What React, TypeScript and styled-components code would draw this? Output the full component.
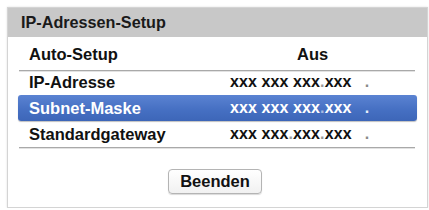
import React from "react";
import styled, { createGlobalStyle } from "styled-components";

const Global = createGlobalStyle`
  html, body { margin: 0; padding: 0; background: #ffffff; }
  body { font-family: "Liberation Sans", Arial, Helvetica, sans-serif; }
`;

const Panel = styled.div`
  box-sizing: border-box;
  margin: 7px 0 0 7px;
  width: 421px;
  height: 201px;
  border: 1px solid #d4d4d4;
  box-shadow: 0 0 2px rgba(0, 0, 0, 0.12);
  background: #ffffff;
  display: flex;
  flex-direction: column;
`;

const Header = styled.div`
  height: 29px;
  background: #c8c8c8;
  display: flex;
  align-items: center;
  padding-left: 13px;
  font-size: 16.2px;
  font-weight: bold;
  color: #1a1a1a;
`;

const List = styled.div`
  margin: 1px 10px 0 10px;
  display: flex;
  flex-direction: column;
`;

const Row = styled.div<{ $h: number; $selected?: boolean; $mt?: number }>`
  box-sizing: border-box;
  height: ${(p) => p.$h}px;
  margin-top: ${(p) => p.$mt ?? 0}px;
  display: grid;
  grid-template-columns: 201px 1fr;
  align-items: center;
  padding-left: 11px;
  border-radius: 3px;
  color: ${(p) => (p.$selected ? "#ffffff" : "#111111")};
  background: ${(p) =>
    p.$selected ? "linear-gradient(#5b83d2, #4670c3 55%, #3d66b8)" : "transparent"};
  box-shadow: ${(p) => (p.$selected ? "0 1px 1px rgba(0,0,0,0.25)" : "none")};
`;

const Divider = styled.div`
  height: 1px;
  margin: 0 2px 0 1px;
  background: #a9a9a9;
  box-shadow: 0 1px 0 #e2e2e2;
`;

const Label = styled.span`
  font-size: 16.5px;
  font-weight: bold;
  white-space: nowrap;
`;

const Value = styled.span`
  font-size: 16px;
  font-weight: bold;
  letter-spacing: 0.1px;
  white-space: nowrap;
`;

const AutoValue = styled.span`
  font-size: 16.5px;
  font-weight: bold;
  padding-left: 67px;
`;

const Faint = styled.span<{ $selected?: boolean }>`
  color: ${(p) => (p.$selected ? "rgba(255,255,255,0.55)" : "#9a9a9a")};
`;

const Tail = styled.span<{ $selected?: boolean }>`
  margin-left: 13px;
  color: ${(p) => (p.$selected ? "#e8eefa" : "#8a8a8a")};
`;

const Footer = styled.div`
  display: flex;
  justify-content: center;
  padding-top: 21px;
  padding-right: 5px;
`;

const Button = styled.button`
  box-sizing: border-box;
  width: 94px;
  height: 25px;
  border: 1px solid #b4b4b4;
  border-radius: 4px;
  background: linear-gradient(#ffffff, #f1f1f1);
  box-shadow: 0 1px 1px rgba(0, 0, 0, 0.15);
  font-family: "Liberation Sans", Arial, sans-serif;
  font-size: 16.5px;
  font-weight: bold;
  color: #111111;
  padding: 0;
`;

type Addr = { label: string; parts: string[]; selected?: boolean; h: number; mt?: number };

const rows: Addr[] = [
  { label: "IP-Adresse", parts: ["xxx xxx xxx", "xxx"], h: 22 },
  { label: "Subnet-Maske", parts: ["xxx xxx xxx", "xxx"], selected: true, h: 26, mt: 2 },
  { label: "Standardgateway", parts: ["xxx xxx", "xxx", "xxx"], h: 26 },
];

export default function App() {
  return (
    <>
      <Global />
      <Panel>
        <Header>IP-Adressen-Setup</Header>
        <List>
          <Row $h={32}>
            <Label>Auto-Setup</Label>
            <AutoValue>Aus</AutoValue>
          </Row>
          <Divider />
          {rows.map((r) => (
            <Row key={r.label} $h={r.h} $mt={r.mt} $selected={r.selected}>
              <Label>{r.label}</Label>
              <Value>
                {r.parts.map((p, i) => (
                  <React.Fragment key={i}>
                    {i > 0 && <Faint $selected={r.selected}>.</Faint>}
                    {p}
                  </React.Fragment>
                ))}
                <Tail $selected={r.selected}>.</Tail>
              </Value>
            </Row>
          ))}
          <Divider />
        </List>
        <Footer>
          <Button>Beenden</Button>
        </Footer>
      </Panel>
    </>
  );
}
